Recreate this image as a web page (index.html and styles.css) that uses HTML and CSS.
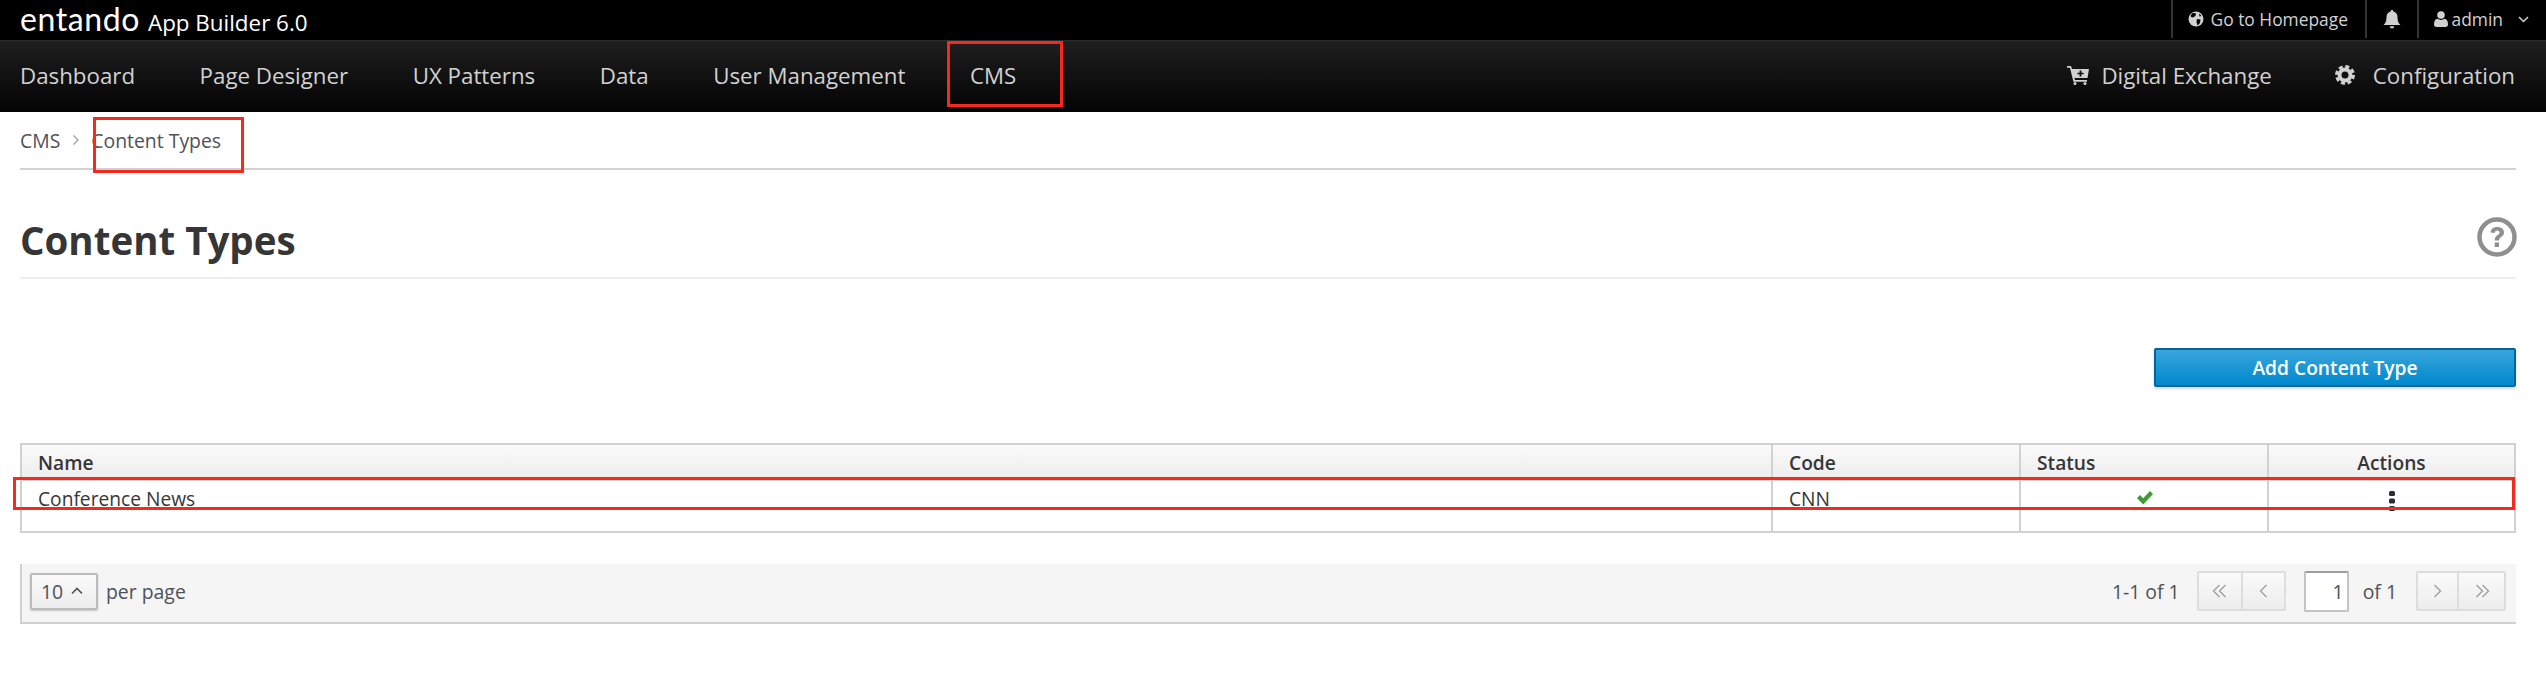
FILE: index.html
```html
<!DOCTYPE html>
<html lang="en">
<head>
<meta charset="utf-8">
<title>Content Types</title>
<link rel="stylesheet" href="styles.css">
</head>
<body>
<header class="topbar">
  <div class="brand"><span class="logo">entando</span><span class="product">App Builder 6.0</span></div>
  <div class="util">
    <a class="util-item home">
      <svg class="ic" width="16" height="16" viewBox="0 0 16 16"><circle cx="8" cy="8" r="7.5" fill="#d1d1d1"/><path d="M4 2.2 7.5 2 8 4 6 6 4 6.5 2.5 5ZM9 8l3.5.5L12 12l-2.5 2.5L8.500 11ZM11 2.500 13.500 5 11.500 5.500Z" fill="#000"/></svg>
      <span>Go to Homepage</span>
    </a>
    <a class="util-item bell">
      <svg width="18" height="19" viewBox="0 0 18 19"><path d="M9 0a1.300 1.300 0 0 1 1.300 1.500C13 2 14.500 4.200 14.500 7c0 5 1.500 6.500 3 8H.5c1.500-1.500 3-3 3-8 0-2.800 1.500-5 4.200-5.500A1.300 1.300 0 0 1 9 0ZM6.800 16.300h4.400a2.200 2.200 0 0 1-4.400 0Z" fill="#d1d1d1"/></svg>
    </a>
    <a class="util-item user">
      <svg width="14" height="16" viewBox="0 0 14 16"><circle cx="7" cy="4" r="3.800" fill="#d1d1d1"/><path d="M0 13.500C0 10 1.500 8 3.500 7.800 5.500 9.300 8.500 9.300 10.500 7.800 12.500 8 14 10 14 13.500 14 15 13 16 11.500 16h-9C1 16 0 15 0 13.500Z" fill="#d1d1d1"/></svg>
      <span>admin</span>
      <svg class="chev" width="11" height="7" viewBox="0 0 11 7"><path d="M1 1l4.500 4.500L10 1" fill="none" stroke="#d1d1d1" stroke-width="1.500"/></svg>
    </a>
  </div>
</header>
<nav class="mainnav">
  <ul class="nav-left">
    <li>Dashboard</li>
    <li>Page Designer</li>
    <li>UX Patterns</li>
    <li>Data</li>
    <li>User Management</li>
    <li>CMS</li>
  </ul>
  <ul class="nav-right">
    <li class="exchange">
      <svg width="22" height="20" viewBox="0 0 22 20"><path d="M0 1h4l1 3h17l-1.500 9H7.500l.4 2H20v1.800H6.400L3 2.800H0Z" fill="#d1d1d1"/><circle cx="8" cy="18.500" r="1.500" fill="#d1d1d1"/><circle cx="18" cy="18.500" r="1.500" fill="#d1d1d1"/><path d="M12.600 5.500h1.800v2.200h2.200v1.600h-2.200v2.200h-1.800V9.300h-2.200V7.700h2.200Z" fill="#111"/></svg>
      <span>Digital Exchange</span>
    </li>
    <li class="config">
      <svg width="20" height="20" viewBox="0 0 20 20"><circle cx="10" cy="10" r="5.500" fill="none" stroke="#d1d1d1" stroke-width="4"/><circle cx="10" cy="10" r="8.500" fill="none" stroke="#d1d1d1" stroke-width="3" stroke-dasharray="4 2.680"/></svg>
      <span>Configuration</span>
    </li>
  </ul>
</nav>
<main class="content">
  <div class="breadcrumb">
    <span>CMS</span>
    <svg class="crumb-sep" width="8" height="12" viewBox="0 0 8 12"><path d="M1.500 1.500 6 6l-4.500 4.500" fill="none" stroke="#9a9a9a" stroke-width="1.200"/></svg>
    <span>Content Types</span>
  </div>
  <div class="title-row">
    <h1>Content Types</h1>
    <svg class="help" width="40" height="40" viewBox="0 0 40 40"><circle cx="20" cy="20" r="17.500" fill="none" stroke="#8f8f8f" stroke-width="4.500"/><path d="M13.500 15.500C14 11.500 16.800 10 20.300 10c3.900 0 6.700 2.100 6.700 5.500 0 4.500-5 4.300-5 8h-4.300c0-5.500 4.800-5.200 4.800-8 0-1.300-1-2-2.300-2-1.500 0-2.400.9-2.600 2.500ZM17.700 25.500H22V30h-4.300Z" fill="#8f8f8f"/></svg>
  </div>
  <div class="action-row"><button class="btn-primary">Add Content Type</button></div>
  <div class="grid-table">
    <div class="cell head">Name</div>
    <div class="cell head">Code</div>
    <div class="cell head">Status</div>
    <div class="cell head center">Actions</div>
    <div class="cell body">Conference News</div>
    <div class="cell body">CNN</div>
    <div class="cell body center">
      <svg class="check" width="18" height="15" viewBox="0 0 18 15"><path d="M1 8l3-3 3.200 3.200L14 1l3 3-9.800 10.500Z" fill="#3f9c35"/></svg>
    </div>
    <div class="cell body center">
      <svg class="kebab" width="6" height="20" viewBox="0 0 6 20"><rect x="0" y="0" width="6" height="5" rx="1.500" fill="#292e34"/><rect x="0" y="7.500" width="6" height="5" rx="1.500" fill="#292e34"/><rect x="0" y="15" width="6" height="5" rx="1.500" fill="#292e34"/></svg>
    </div>
  </div>
  <div class="paginator">
    <div class="pg-left">
      <button class="per-btn"><span>10</span><svg width="12" height="8" viewBox="0 0 12 8"><path d="M1 6.500 6 1.500l5 5" fill="none" stroke="#4d5258" stroke-width="1.600"/></svg></button>
      <span class="per-label">per page</span>
    </div>
    <div class="pg-right">
      <span class="pg-count">1-1 of 1</span>
      <div class="pg-group">
        <button class="pg-btn first"><svg width="16" height="14" viewBox="0 0 16 14"><path d="M7.500 1 1.500 7l6 6M13.500 1l-6 6 6 6" fill="none" stroke="#9c9c9c" stroke-width="1.300"/></svg></button>
        <button class="pg-btn prev"><svg width="9" height="14" viewBox="0 0 9 14"><path d="M7.500 1 1.500 7l6 6" fill="none" stroke="#9c9c9c" stroke-width="1.300"/></svg></button>
      </div>
      <div class="pg-input">1</div>
      <span class="pg-of">of 1</span>
      <div class="pg-group">
        <button class="pg-btn next"><svg width="9" height="14" viewBox="0 0 9 14"><path d="M1.500 1l6 6-6 6" fill="none" stroke="#9c9c9c" stroke-width="1.300"/></svg></button>
        <button class="pg-btn last"><svg width="16" height="14" viewBox="0 0 16 14"><path d="M2.500 1l6 6-6 6M8.500 1l6 6-6 6" fill="none" stroke="#9c9c9c" stroke-width="1.300"/></svg></button>
      </div>
    </div>
  </div>
</main>
<div class="mark mark-cms"></div>
<div class="mark mark-crumb"></div>
<div class="mark mark-row"></div>
</body>
</html>
```
FILE: styles.css
```css
* { box-sizing: border-box; }
html, body { margin: 0; padding: 0; }
body {
  width: 2546px;
  height: 690px;
  overflow: hidden;
  background: #fff;
  color: #363636;
  font-family: "Open Sans", "Liberation Sans", sans-serif;
  position: relative;
}
svg { display: block; flex: none; }
button { font-family: inherit; }
ul { list-style: none; margin: 0; padding: 0; }

.topbar {
  height: 40px;
  background: #000;
  display: flex;
  justify-content: space-between;
  padding-left: 20px;
  color: #d1d1d1;
}
.brand { display: flex; align-items: baseline; color: #fff; line-height: 38px; }
.logo { font-family: Lato, sans-serif; font-size: 32px; font-weight: 400; width: 128px; letter-spacing: 0.6px; }
.product { font-size: 22.400px; }
.util { display: flex; height: 38px; font-size: 17.400px; padding-right: 17px; }
.util-item { display: flex; align-items: center; border-left: 2px solid #333; }
.home { padding-left: 15px; width: 194px; gap: 7px; }
.bell { padding-left: 16px; width: 52px; }
.user { padding-left: 15px; gap: 4px; }
.chev { margin-left: 11px; }

.mainnav {
  height: 72px;
  background: linear-gradient(#1f1f1f, #030303);
  border-top: 1px solid #2b2b2b;
  display: flex;
  justify-content: space-between;
  padding: 0 31px 3px 20px;
  color: #d1d1d1;
  font-size: 22.300px;
}
.nav-left, .nav-right { display: flex; align-items: center; height: 100%; }
.nav-left { gap: 64.500px; }
.nav-right li { display: flex; align-items: center; }
.exchange { gap: 12px; margin-right: 63px; }
.config { gap: 18px; }

.content { padding: 0 30px 0 20px; }
.breadcrumb {
  height: 58px;
  border-bottom: 2px solid #d1d1d1;
  display: flex;
  align-items: center;
  font-size: 19.400px;
  color: #4d5258;
}
.crumb-sep { margin: 0 11px 0 12px; }
.title-row {
  height: 109px;
  border-bottom: 2px solid #ededed;
  display: flex;
  align-items: flex-start;
  justify-content: space-between;
  padding-top: 44px;
}
h1 { margin: 0; font-size: 38.500px; line-height: 52px; font-weight: 700; color: #363636; }
.help { margin-top: 3px; margin-right: -1px; }
.action-row { display: flex; justify-content: flex-end; margin-top: 69px; }
.btn-primary {
  width: 362px;
  height: 39px;
  border: 2px solid #00659c;
  border-radius: 2px;
  background: linear-gradient(#39a5dc, #0088ce);
  color: #fff;
  font-size: 19.200px;
  font-weight: 600;
  box-shadow: 0 2px 3px rgba(0, 0, 0, .15);
  padding: 0;
}

.grid-table {
  margin-top: 56px;
  display: grid;
  grid-template-columns: 1751px 248px 248px 1fr;
  grid-template-rows: 36px 32px 20px;
  border: 2px solid #d1d1d1;
  height: 90px;
  background:
    linear-gradient(#d1d1d1, #d1d1d1) 1749px 0 / 2px 100% no-repeat,
    linear-gradient(#d1d1d1, #d1d1d1) 1997px 0 / 2px 100% no-repeat,
    linear-gradient(#d1d1d1, #d1d1d1) 2245px 0 / 2px 100% no-repeat;
}
.cell { font-size: 19.200px; padding-left: 16px; display: flex; align-items: center; }
.cell.center { justify-content: center; padding-left: 0; }
.head {
  font-weight: 600;
  background: linear-gradient(#fafafa, #ededed);
  border-bottom: 2px solid #d1d1d1;
  border-right: 2px solid #d1d1d1;
}
.head:nth-child(4) { border-right: 0; }
.body { align-self: stretch; padding-top: 3px; }
.check { margin-top: -3px; }
.kebab { margin-top: 4px; }

.paginator {
  margin-top: 31px;
  height: 60px;
  background: #f5f5f5;
  border-left: 2px solid #d1d1d1;
  border-bottom: 2px solid #d1d1d1;
  display: flex;
  justify-content: space-between;
  align-items: flex-start;
  padding: 8px 10px 0 8px;
  font-size: 19.400px;
  color: #4d5258;
}
.pg-left, .pg-right { display: flex; align-items: center; height: 38px; }
.per-btn {
  width: 68px;
  height: 37px;
  border: 2px solid #bbb;
  border-radius: 2px;
  background: linear-gradient(#fafafa, #ededed);
  box-shadow: 0 1px 2px rgba(0, 0, 0, .2);
  color: #4d5258;
  font-size: 19.400px;
  font-weight: 500;
  display: flex;
  align-items: center;
  gap: 8px;
  padding: 0 0 0 9px;
}
.per-label { margin-left: 8px; }
.pg-count { margin-right: 17px; }
.pg-group { display: flex; height: 40px; border: 2px solid #ddd; border-radius: 2px; background: linear-gradient(#fafafa, #ededed); }
.pg-btn { border: 0; background: none; padding: 0; display: flex; align-items: center; justify-content: center; height: 100%; }
.first { width: 44px; border-right: 2px solid #ddd; }
.prev { width: 41px; }
.next { width: 41px; border-right: 2px solid #ddd; }
.last { width: 45px; }
.pg-input {
  width: 45px;
  height: 41px;
  margin-left: 18px;
  background: #fff;
  border: 2px solid #c4c4c4;
  border-top-color: #9e9e9e;
  border-radius: 2px;
  text-align: right;
  padding-right: 3px;
  line-height: 37px;
}
.pg-of { margin: 0 19px 0 14px; }

.mark { position: absolute; border: 3px solid #f5291c; }
.mark-cms { left: 947px; top: 41px; width: 116px; height: 66px; }
.mark-crumb { left: 93px; top: 117px; width: 151px; height: 56px; }
.mark-row { left: 13px; top: 477px; width: 2502px; height: 33px; }
```
